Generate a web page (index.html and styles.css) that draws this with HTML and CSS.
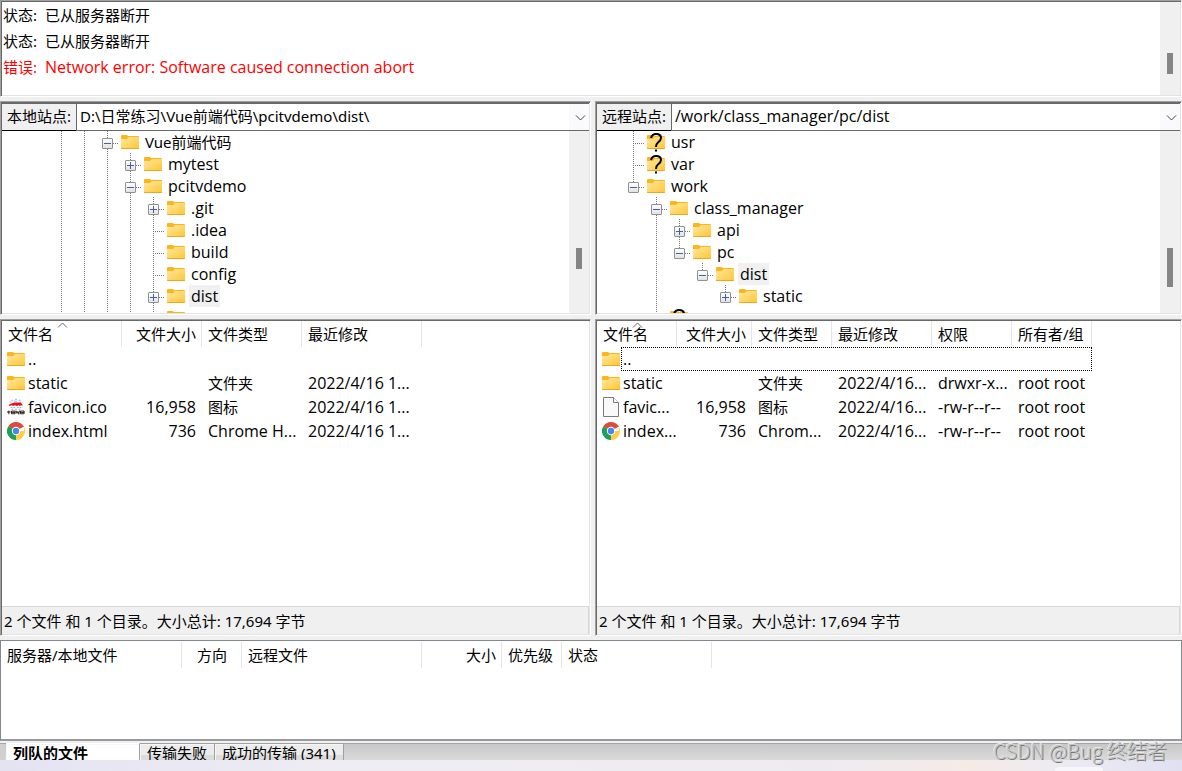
FILE: index.html
```html
<!DOCTYPE html>
<html lang="zh-CN">
<head>
<meta charset="utf-8">
<title>FTP</title>
<link rel="stylesheet" href="styles.css">
</head>
<body>
<svg class="defs" aria-hidden="true">
  <defs>
    <linearGradient id="gold" x1="0" y1="0" x2="1" y2="1"><stop offset="0" stop-color="#ffe9a6"/><stop offset="1" stop-color="#ffc734"/></linearGradient>
    <symbol id="folder" viewBox="0 0 18 14">
      <path d="M0 1q0-1 1-1h5l1 1h10q1 0 1 1v11q0 1-1 1H1q-1 0-1-1z" fill="#fcb61a"/>
      <path d="M0 4h6l2-2h10v11H0z" fill="url(#gold)"/>
      <path d="M0 13h18q0 1-1 1H1q-1 0-1-1z" fill="#e9a820"/>
    </symbol>
    <symbol id="mark" viewBox="0 0 18 20">
      <path d="M4 5Q5 1 9 1q5 0 5 4 0 2-3 4.500-2 1.500-2 4.500" fill="none" stroke="#000" stroke-width="2"/>
      <path d="M8 16.500h2v2H8z"/>
    </symbol>
    <symbol id="chrome" viewBox="0 0 18 18">
      <path d="M9 9L1.200 4.500A9 9 0 0 1 16.800 4.500z" fill="#dd4b3e"/>
      <path d="M9 9L1.200 4.500A9 9 0 0 0 9 18z" fill="#1da05a"/>
      <path d="M9 9h7.800V4.500A9 9 0 0 1 9 18z" fill="#ffce43"/>
      <path d="M9 5h8.050l-.25-.5L9 3z" fill="#dd4b3e"/>
      <path d="M5.500 11L1.200 4.500 5 7z" fill="#1da05a"/>
      <path d="M12.500 11L9 18l1-5z" fill="#ffce43"/>
      <circle cx="9" cy="9" r="4.200" fill="#fff"/><circle cx="9" cy="9" r="3.200" fill="#4688f1"/>
    </symbol>
    <symbol id="page" viewBox="0 0 18 20">
      <path d="M1.500.5h10l5 5v14h-15z" fill="#f9f9f9" stroke="#7b7b7b"/>
      <path d="M11.500.5v5h5" fill="#fff" stroke="#7b7b7b"/>
    </symbol>
    <symbol id="badge" viewBox="0 0 20 18">
      <path d="M5 1.500h2m2-1h2m2 1h2M3 3.500h2m3-1h3m3 1h2M4 9.500h2m1 0h2m2 0h2m1 0h2M5 11.500h2m2 0h2m2 0h2" stroke="#86a9d3" fill="none"/>
      <path d="M2 7.500q0-2 3-2.500l3-1h7l2 2v2.500l-1-1.500-2 1-1-1-2 1-2-1-2 1-2-1-2 1z" fill="#e3141f"/>
      <path d="M0 14.500h4M2 13v4M5 13.500h4v3H5zm0 1.500h4M10 13l1 3 1-2 1 2 1-3M15 13.500h4v3h-4zm0 1.500h4M12 16.500h2" fill="none" stroke="#161010"/>
    </symbol>
    <symbol id="chevron" viewBox="0 0 11 6"><path d="M1 .5l4.500 4.500L10 .5" fill="none" stroke="#444"/></symbol>
    <symbol id="sort" viewBox="0 0 11 6"><path d="M1 5.500L5.500 1 10 5.500" fill="none" stroke="#666"/></symbol>
  </defs>
</svg>

<main class="app">
  <section class="pane log">
    <dl class="log-lines">
      <div><dt>状态:</dt><dd>已从服务器断开</dd></div>
      <div><dt>状态:</dt><dd>已从服务器断开</dd></div>
      <div class="error"><dt>错误:</dt><dd class="latin">Network error: Software caused connection abort</dd></div>
    </dl>
    <div class="scroll scroll-log"><i></i></div>
  </section>

  <div class="sites">
    <section class="pane">
      <div class="address">
        <label for="local">本地站点:</label>
        <div class="combo"><select id="local"><option>D:\日常练习\Vue前端代码\pcitvdemo\dist\</option></select><svg class="chev"><use href="#chevron"/></svg></div>
      </div>
      <div class="tree-wrap">
        <ul class="tree local-tree">
          <li><i class="v"></i><i class="v"></i><i class="v h"><button class="exp" aria-label="折叠"></button></i><svg class="folder"><use href="#folder"/></svg><span class="cjk">Vue前端代码</span></li>
          <li><i class="v"></i><i class="v"></i><i class="v"></i><i class="v h"><button class="exp plus" aria-label="展开"></button></i><svg class="folder"><use href="#folder"/></svg><span>mytest</span></li>
          <li><i class="v"></i><i class="v"></i><i class="v"></i><i class="v h"><button class="exp" aria-label="折叠"></button></i><svg class="folder"><use href="#folder"/></svg><span>pcitvdemo</span></li>
          <li><i class="v"></i><i class="v"></i><i class="v"></i><i class="v"></i><i class="v h"><button class="exp plus" aria-label="展开"></button></i><svg class="folder"><use href="#folder"/></svg><span>.git</span></li>
          <li><i class="v"></i><i class="v"></i><i class="v"></i><i class="v"></i><i class="v h"></i><svg class="folder"><use href="#folder"/></svg><span>.idea</span></li>
          <li><i class="v"></i><i class="v"></i><i class="v"></i><i class="v"></i><i class="v h"></i><svg class="folder"><use href="#folder"/></svg><span>build</span></li>
          <li><i class="v"></i><i class="v"></i><i class="v"></i><i class="v"></i><i class="v h"></i><svg class="folder"><use href="#folder"/></svg><span>config</span></li>
          <li><i class="v"></i><i class="v"></i><i class="v"></i><i class="v"></i><i class="v h"><button class="exp plus" aria-label="展开"></button></i><svg class="folder"><use href="#folder"/></svg><span class="selected">dist</span></li>
          <li><i class="v"></i><i class="v"></i><i class="v"></i><i class="v"></i><i class="v h"></i><svg class="folder"><use href="#folder"/></svg></li>
        </ul>
        <div class="scroll scroll-local"><i></i></div>
      </div>
    </section>

    <section class="pane">
      <div class="address">
        <label for="remote">远程站点:</label>
        <div class="combo"><select id="remote" class="latin"><option>/work/class_manager/pc/dist</option></select><svg class="chev"><use href="#chevron"/></svg></div>
      </div>
      <div class="tree-wrap">
        <ul class="tree remote-tree">
          <li><i class="v h"></i><b class="unknown"><svg class="folder"><use href="#folder"/></svg><svg class="mark"><use href="#mark"/></svg></b><span>usr</span></li>
          <li><i class="v h"></i><b class="unknown"><svg class="folder"><use href="#folder"/></svg><svg class="mark"><use href="#mark"/></svg></b><span>var</span></li>
          <li><i class="end h"><button class="exp" aria-label="折叠"></button></i><svg class="folder"><use href="#folder"/></svg><span>work</span></li>
          <li><i></i><i class="v h"><button class="exp" aria-label="折叠"></button></i><svg class="folder"><use href="#folder"/></svg><span>class_manager</span></li>
          <li><i></i><i class="v"></i><i class="v h"><button class="exp plus" aria-label="展开"></button></i><svg class="folder"><use href="#folder"/></svg><span>api</span></li>
          <li><i></i><i class="v"></i><i class="end h"><button class="exp" aria-label="折叠"></button></i><svg class="folder"><use href="#folder"/></svg><span>pc</span></li>
          <li><i></i><i class="v"></i><i></i><i class="end h"><button class="exp" aria-label="折叠"></button></i><svg class="folder"><use href="#folder"/></svg><span class="selected">dist</span></li>
          <li><i></i><i class="v"></i><i></i><i></i><i class="end h"><button class="exp plus" aria-label="展开"></button></i><svg class="folder"><use href="#folder"/></svg><span>static</span></li>
          <li><i></i><i class="v h"></i><b class="unknown"><svg class="folder"><use href="#folder"/></svg><svg class="mark"><use href="#mark"/></svg></b></li>
        </ul>
        <div class="scroll scroll-remote"><i></i></div>
      </div>
    </section>
  </div>

  <div class="sites lists">
    <section class="pane files">
      <div class="table-wrap">
        <table class="local-files">
          <colgroup><col class="w120"><col class="w80"><col class="w100"><col class="w120"></colgroup>
          <thead><tr><th>文件名<svg class="sort"><use href="#sort"/></svg></th><th class="num">文件大小</th><th>文件类型</th><th>最近修改</th></tr></thead>
          <tbody>
            <tr><td class="name"><div><svg class="folder"><use href="#folder"/></svg>..</div></td><td></td><td></td><td></td></tr>
            <tr><td class="name"><div><svg class="folder"><use href="#folder"/></svg>static</div></td><td></td><td class="cjk">文件夹</td><td>2022/4/16 1...</td></tr>
            <tr><td class="name"><div><svg class="file"><use href="#badge"/></svg>favicon.ico</div></td><td class="num">16,958</td><td class="cjk">图标</td><td>2022/4/16 1...</td></tr>
            <tr><td class="name"><div><svg class="file"><use href="#chrome"/></svg>index.html</div></td><td class="num">736</td><td>Chrome H...</td><td>2022/4/16 1...</td></tr>
          </tbody>
        </table>
      </div>
      <footer>2 个文件 和 1 个目录。大小总计: 17,694 字节</footer>
    </section>

    <section class="pane files">
      <div class="table-wrap">
        <table class="remote-files">
          <colgroup><col class="w80"><col class="w75"><col class="w80"><col class="w100"><col class="w80"><col class="w80"></colgroup>
          <thead><tr><th>文件名<svg class="sort"><use href="#sort"/></svg></th><th class="num">文件大小</th><th>文件类型</th><th>最近修改</th><th>权限</th><th>所有者/组</th></tr></thead>
          <tbody>
            <tr class="focused"><td class="name"><div><svg class="folder"><use href="#folder"/></svg>..</div></td><td></td><td></td><td></td><td></td><td></td></tr>
            <tr><td class="name"><div><svg class="folder"><use href="#folder"/></svg>static</div></td><td></td><td class="cjk">文件夹</td><td>2022/4/16...</td><td>drwxr-x...</td><td>root root</td></tr>
            <tr><td class="name"><div><svg class="file"><use href="#page"/></svg>favic...</div></td><td class="num">16,958</td><td class="cjk">图标</td><td>2022/4/16...</td><td>-rw-r--r--</td><td>root root</td></tr>
            <tr><td class="name"><div><svg class="file"><use href="#chrome"/></svg>index...</div></td><td class="num">736</td><td>Chrom...</td><td>2022/4/16...</td><td>-rw-r--r--</td><td>root root</td></tr>
          </tbody>
        </table>
      </div>
      <footer>2 个文件 和 1 个目录。大小总计: 17,694 字节</footer>
    </section>
  </div>

  <section class="queue">
    <table class="queue-table">
      <colgroup><col class="w181"><col class="w60"><col class="w180"><col class="w80"><col class="w60"><col class="w150"></colgroup>
      <thead><tr><th>服务器/本地文件</th><th class="mid">方向</th><th>远程文件</th><th class="num">大小</th><th>优先级</th><th>状态</th></tr></thead>
    </table>
  </section>

  <nav class="tabs">
    <button class="tab active">列队的文件</button><button class="tab">传输失败</button><button class="tab">成功的传输 (341)</button>
  </nav>
  <div class="desk"><i></i></div>
  <div class="credit">CSDN @Bug 终结者</div>
</main>
</body>
</html>
```
FILE: styles.css
```css
* { box-sizing: border-box; }

body {
  margin: 0;
  background: #f0f0f0;
  color: #000;
  font: 15px/22px "Noto Sans", "Noto Sans CJK SC", sans-serif;
}

button, select { font: inherit; color: inherit; }
svg { display: block; flex: none; }
.defs { position: absolute; width: 0; height: 0; }

.app {
  position: relative;
  display: flex;
  flex-direction: column;
  height: 100vh;
  min-height: 640px;
  overflow: hidden;
}

/* Sunken frame shared by every pane */
.pane {
  min-width: 0;
  background: #fff;
  border: 1px solid;
  border-color: #a0a0a0 #fff #fff #a0a0a0;
  box-shadow: inset 1px 1px #696969, inset -1px -1px #e3e3e3;
  padding: 1px;
}

.log { display: flex; height: 97px; flex: none; }
.log-lines { flex: 1; margin: 0; padding: 0 1px; }
.log-lines div { display: flex; height: 26px; line-height: 26px; }
.log-lines dt { width: 42px; }
.log-lines dd { margin: 0; }
.error { color: #f00; }

.scroll { flex: none; width: 20px; background: #f0f0f0; }
.scroll i { display: block; width: 6px; height: 21px; margin-left: 7px; background: #858585; }
.scroll-log { padding-top: 51px; }
.scroll-local, .scroll-remote { padding-top: 117px; }
.scroll-remote i { height: 39px; }

.sites {
  display: grid;
  grid-template-columns: 591fr 587fr;
  gap: 4px;
  margin-top: 4px;
  flex: none;
}
.lists { flex: 1; min-height: 0; }

.address { display: flex; height: 28px; border-top: 1px solid #696969; }
.address label {
  width: 74px;
  padding-left: 5px;
  line-height: 24px;
  white-space: nowrap;
  background: #f0f0f0;
  border-bottom: 1px solid #000;
}
.combo {
  position: relative;
  display: flex;
  flex: 1;
  min-width: 0;
  border-left: 1px solid #696969;
  border-bottom: 1px solid #696969;
}
.combo select {
  appearance: none;
  flex: 1;
  min-width: 0;
  padding: 0 22px 2px 3px;
  border: 0;
  border-radius: 0;
  background: linear-gradient(#fafafc, #fafafc) right / 20px 100% no-repeat #fff;
  outline: 0;
}
.chev { position: absolute; right: 3px; top: 11px; width: 11px; height: 6px; pointer-events: none; }

.tree-wrap { display: flex; height: 182px; overflow: hidden; }
.tree { flex: 1; min-width: 0; margin: 0; padding: 0; list-style: none; }
.local-tree { padding-left: 48px; }
.remote-tree { padding-left: 25px; }
.tree li { display: flex; height: 22px; }
.tree li > i { flex: none; width: 23px; padding: 7px 6px 4px; background-repeat: no-repeat; }
.v { background-image: repeating-linear-gradient(#777 0 1px, transparent 1px 2px); background-position: 11px 0; background-size: 1px 22px; }
.h {
  background-image: repeating-linear-gradient(#777 0 1px, transparent 1px 2px), repeating-linear-gradient(90deg, #777 0 1px, transparent 1px 2px);
  background-position: 11px 0, 11px 12px;
  background-size: 1px 22px, 12px 1px;
}
.end { background-size: 1px 12px, 12px 1px; }
.exp {
  display: block;
  width: 11px;
  height: 11px;
  padding: 0;
  border: 1px solid #919191;
  border-radius: 1px;
  background: linear-gradient(#4461a8, #4461a8) center / 7px 1px no-repeat, linear-gradient(#fff, #e2e2e2);
}
.plus {
  background: linear-gradient(#4461a8, #4461a8) center / 7px 1px no-repeat, linear-gradient(#4461a8, #4461a8) center / 1px 7px no-repeat, linear-gradient(#fff, #e2e2e2);
}
.folder { width: 18px; height: 14px; }
.tree .folder { margin: 4px 4px 0 2px; }
.tree span { padding: 0 2px; white-space: nowrap; }
.tree .selected { background: #f0f0f0; }
.unknown { position: relative; }
.mark { position: absolute; left: 2px; top: 2px; width: 18px; height: 20px; }

.latin, .tree span, td { font-family: "Open Sans", "Noto Sans", sans-serif; font-size: 16px; }
.tree .cjk, td.cjk { font-family: "Noto Sans", "Noto Sans CJK SC", sans-serif; font-size: 15px; }

.files { display: flex; flex-direction: column; }
.table-wrap { flex: 1; min-height: 0; overflow: hidden; }
table { table-layout: fixed; border-collapse: collapse; }
.local-files { width: 420px; }
.remote-files { width: 495px; }
.queue-table { width: 711px; }
.w60 { width: 60px; }
.w75 { width: 75px; }
.w80 { width: 80px; }
.w100 { width: 100px; }
.w120 { width: 120px; }
.w150 { width: 150px; }
.w180 { width: 180px; }
.w181 { width: 181px; }
th, td { padding: 0 6px; text-align: left; white-space: nowrap; }
th {
  position: relative;
  height: 26px;
  font-weight: 400;
  line-height: 26px;
  box-shadow: inset -1px 0 #e5e5e5;
}
td { height: 24px; line-height: 24px; }
.num { text-align: right; }
.mid { text-align: center; }
.sort { position: absolute; left: calc(50% - 5px); top: 1px; width: 11px; height: 6px; }
.name { padding: 0 0 0 5px; }
.name div { display: flex; align-items: center; gap: 3px; height: 24px; }
.file { width: 18px; height: 20px; }
.focused { position: relative; }
.focused::after {
  content: "";
  position: absolute;
  inset: 0 0 0 24px;
  border: 1px dotted #000;
}

footer {
  flex: none;
  height: 28px;
  padding-left: 2px;
  line-height: 28px;
  white-space: nowrap;
  background: #f0f0f0;
  border-top: 1px solid #d7d7d7;
  border-right: 1px solid #d7d7d7;
}

.queue {
  flex: none;
  height: 101px;
  margin-top: 4px;
  padding-top: 1px;
  background: #fff;
  border: 1px solid #828790;
  border-bottom: 2px solid #97999f;
}

.tabs {
  display: flex;
  flex: none;
  height: 17px;
  margin-top: 2px;
  padding-left: 6px;
  overflow: hidden;
  background: linear-gradient(#c6c6c6, #dadada);
  box-shadow: inset 0 1px #a5a5a5, inset 5px 0 #d0d0d0;
}
.tab {
  height: 20px;
  padding: 0 7px;
  line-height: 18px;
  white-space: nowrap;
  border: 1px solid #a0a0a0;
  border-left: 0;
  background: linear-gradient(#ececec 0 11px, #dcdcdc 11px);
  box-shadow: inset 1px 1px #f6f6f6;
}
.tab.active {
  width: 134px;
  text-align: left;
  font-weight: 700;
  background: #fff;
  border-top-color: #fff;
}

.desk {
  flex: none;
  height: 11px;
  background: linear-gradient(90deg, #e4e3f2, #eeedf3 30%, #eeebf0 70%, #f5eae6 82%, #ecebf2 90%, #e1e0f2);
}
.desk i {
  display: block;
  width: 48px;
  height: 5px;
  margin: 6px 79px 0 auto;
  border-radius: 4px 4px 0 0;
  background: #f7f6fa;
}
.desk { padding-top: 1px; }

.credit {
  position: absolute;
  right: 15px;
  bottom: 6px;
  color: #c4c4c4;
  font: 300 20px/28px "Noto Sans CJK SC", sans-serif;
  white-space: nowrap;
  text-shadow: 1px 1px #777, -1px -1px #e8e8e8;
}
```
